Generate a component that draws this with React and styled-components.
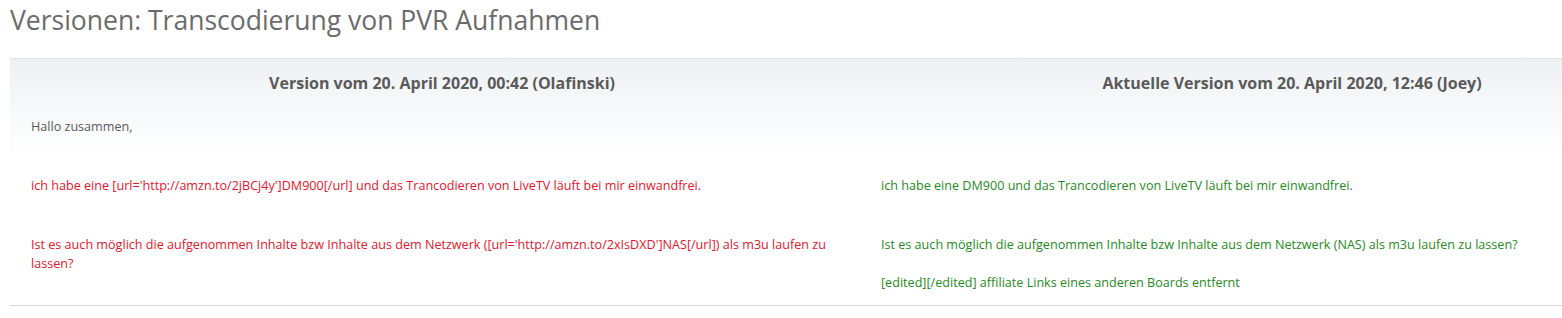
import React from "react";
import styled, { createGlobalStyle } from "styled-components";

const Global = createGlobalStyle`
  html, body { margin: 0; padding: 0; background: #fff; overflow: hidden; }
  body { font-family: "Open Sans", "Noto Sans", sans-serif; }
`;

const Page = styled.div`
  padding: 0 0 0 10px;
  width: 1800px;
`;

const Title = styled.h1`
  margin: 0;
  padding: 2px 0 0 0;
  height: 58px;
  box-sizing: border-box;
  font-size: 26.5px;
  font-weight: 400;
  line-height: 36px;
  color: #6b6b6b;
`;

const Table = styled.div`
  width: 1700px;
  border-top: 1px solid #dfe4e8;
  border-bottom: 1px solid #cfd8dc;
  background: linear-gradient(to bottom, #eef1f4 0px, #ffffff 96px);
`;

const Row = styled.div`
  display: grid;
  grid-template-columns: 850px 850px;
`;

const HeadCell = styled.div`
  padding: 13px 21px 3px 35px;
  text-align: center;
  font-size: 16px;
  font-weight: 700;
  line-height: 22px;
  color: #5a5a5a;
`;

const Cell = styled.div`
  padding: ${(p) => (p.$last ? "20px 21px 13px" : "20px 21px")};
  font-size: 12.6px;
  line-height: 19px;
  color: ${(p) => (p.$kind === "del" ? "#e2162b" : p.$kind === "ins" ? "#1f8a24" : "#5a5a5a")};
`;

const Para = styled.p`
  margin: 0;
  & + & { margin-top: 19px; }
`;

export default function App() {
  return (
    <>
      <Global />
      <Page>
        <Title>Versionen: Transcodierung von PVR Aufnahmen</Title>
        <Table>
          <Row>
            <HeadCell>Version vom 20. April 2020, 00:42 (Olafinski)</HeadCell>
            <HeadCell>Aktuelle Version vom 20. April 2020, 12:46 (Joey)</HeadCell>
          </Row>
          <Row>
            <Cell>Hallo zusammen,</Cell>
            <Cell />
          </Row>
          <Row>
            <Cell $kind="del">
              ich habe eine [url='http://amzn.to/2jBCj4y']DM900[/url] und das Trancodieren von LiveTV läuft bei mir einwandfrei.
            </Cell>
            <Cell $kind="ins">
              ich habe eine DM900 und das Trancodieren von LiveTV läuft bei mir einwandfrei.
            </Cell>
          </Row>
          <Row>
            <Cell $kind="del" $last>
              <Para>
                Ist es auch möglich die aufgenommen Inhalte bzw Inhalte aus dem Netzwerk ([url='http://amzn.to/2xIsDXD']NAS[/url]) als m3u laufen zu lassen?
              </Para>
            </Cell>
            <Cell $kind="ins" $last>
              <Para>
                Ist es auch möglich die aufgenommen Inhalte bzw Inhalte aus dem Netzwerk (NAS) als m3u laufen zu lassen?
              </Para>
              <Para>[edited][/edited] affiliate Links eines anderen Boards entfernt</Para>
            </Cell>
          </Row>
        </Table>
      </Page>
    </>
  );
}
